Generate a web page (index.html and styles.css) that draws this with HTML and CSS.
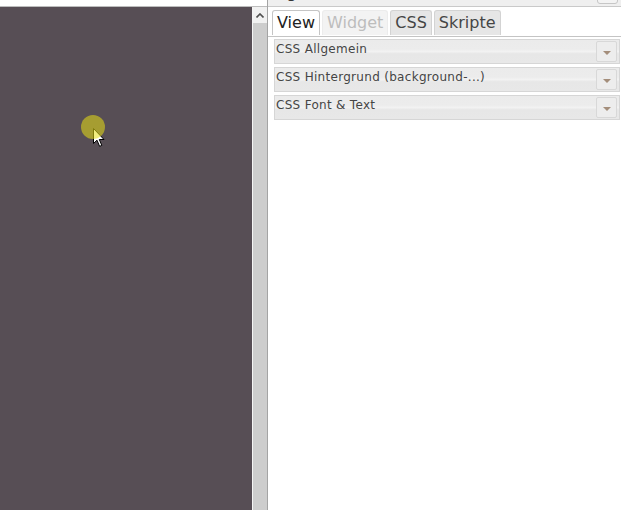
FILE: index.html
```html
<!DOCTYPE html>
<html>
<head>
<meta charset="utf-8">
<link rel="stylesheet" href="styles.css">
</head>
<body>
<div class="app">
  <div class="left">
    <div class="toolbar"></div>
    <div class="stage-row">
      <div class="stage">
        <div class="pointer">
          <svg class="cursor" width="13" height="20" viewBox="0 0 13 20">
            <path d="M0.5 0.5 L0.5 15.5 L4 12.2 L6.6 18.3 L8.8 17.4 L6.3 11.5 L11 11.5 Z" fill="#fff" stroke="#000" stroke-width="1"/>
          </svg>
          <div class="spot"></div>
        </div>
      </div>
      <div class="scrollbar">
        <div class="scroll-up">
          <svg width="8" height="5" viewBox="0 0 8 5"><path d="M0.5 4.5 L4 1 L7.5 4.5" fill="none" stroke="#505050" stroke-width="1.6"/></svg>
        </div>
        <div class="scroll-thumb"></div>
      </div>
    </div>
  </div>
  <div class="panel">
    <div class="panel-head">
      <span class="panel-title">Eigenschaften</span>
      <span class="panel-btn"></span>
    </div>
    <div class="tabs">
      <div class="tab active">View</div>
      <div class="tab disabled">Widget</div>
      <div class="tab">CSS</div>
      <div class="tab">Skripte</div>
    </div>
    <div class="sections">
      <div class="section">
        <span class="section-title">CSS Allgemein</span>
        <span class="dd"><span class="tri"></span></span>
      </div>
      <div class="section">
        <span class="section-title">CSS Hintergrund (background-...)</span>
        <span class="dd"><span class="tri"></span></span>
      </div>
      <div class="section">
        <span class="section-title">CSS Font &amp; Text</span>
        <span class="dd"><span class="tri"></span></span>
      </div>
    </div>
  </div>
</div>
</body>
</html>
```

FILE: styles.css
```css
html, body {
  margin: 0;
  padding: 0;
  height: 100%;
  overflow: hidden;
}
body {
  font-family: "DejaVu Sans", Verdana, sans-serif;
  background: #fff;
}
.app {
  display: flex;
  width: 621px;
  height: 510px;
}
.left {
  width: 267px;
  display: flex;
  flex-direction: column;
}
.toolbar {
  height: 6px;
  background: #fff;
  border-bottom: 1px solid #bdbdbd;
}
.stage-row {
  flex: 1;
  display: flex;
}
.stage {
  width: 252px;
  background: #574e55;
  border-right: 1px solid #f4f4f4;
  position: relative;
}
.pointer {
  position: absolute;
  left: 81px;
  top: 108px;
  width: 26px;
  height: 40px;
}
.cursor {
  position: absolute;
  left: 12px;
  top: 13px;
}
.spot {
  position: absolute;
  left: 0;
  top: 0;
  width: 24px;
  height: 24px;
  border-radius: 50%;
  background: rgba(232, 222, 20, 0.55);
}
.scrollbar {
  width: 14px;
  display: flex;
  flex-direction: column;
  background: #cdcdcd;
}
.scroll-up {
  height: 16px;
  background: #f1f1f1;
  display: flex;
  align-items: center;
  justify-content: center;
}
.scroll-thumb {
  flex: 1;
  background: #cdcdcd;
}
.panel {
  flex: 1;
  border-left: 1px solid #a4a4a4;
  background: #fff;
  display: flex;
  flex-direction: column;
}
.panel-head {
  height: 6px;
  background: #efefef;
  border-bottom: 1px solid #c9c9c9;
  overflow: hidden;
  display: flex;
  justify-content: space-between;
  align-items: flex-start;
}
.panel-title {
  font-size: 16px;
  line-height: 18px;
  margin-top: -16px;
  margin-left: 4px;
  color: #333;
}
.panel-btn {
  width: 19px;
  height: 18px;
  margin-top: -16px;
  margin-right: 3px;
  border: 1px solid #c6c6c6;
  border-radius: 3px;
  background: #f3f3f3;
}
.tabs {
  display: flex;
  gap: 2px;
  padding: 3px 0 0 4px;
  border-bottom: 1px solid #c4c4c4;
}
.tab {
  font-size: 16px;
  line-height: 24px;
  padding: 0 4px;
  border: 1px solid #d3d3d3;
  border-bottom: none;
  border-radius: 3px 3px 0 0;
  background: #e6e6e6;
  color: #454545;
  margin-bottom: 1px;
}
.tab.active {
  background: #fff;
  border-color: #c5c5c5;
  color: #212121;
}
.tab.disabled {
  background: #f3f3f3;
  border-color: #ececec;
  color: #bdbdbd;
}
.sections {
  display: flex;
  flex-direction: column;
  gap: 3px;
  padding: 2px 1px 0 6px;
}
.section {
  height: 23px;
  border: 1px solid #d6d6d6;
  background: linear-gradient(to bottom, #ebebeb 0%, #ececec 40%, #f2f2f2 50%, #e7e7e7 60%, #e8e8e8 100%);
  display: flex;
  justify-content: space-between;
  align-items: center;
}
.section-title {
  align-self: flex-start;
  font-size: 12px;
  line-height: 14px;
  letter-spacing: 0.3px;
  padding: 2px 0 0 1px;
  color: #454545;
}
.dd {
  width: 19px;
  height: 19px;
  margin-right: 2px;
  border: 1px solid #d8d8d8;
  border-radius: 2px;
  background: #ededed;
  display: flex;
  align-items: center;
  justify-content: center;
}
.tri {
  width: 0;
  height: 0;
  border-left: 4px solid transparent;
  border-right: 4px solid transparent;
  border-top: 4px solid #a48e7b;
  margin-top: 2px;
}
```
